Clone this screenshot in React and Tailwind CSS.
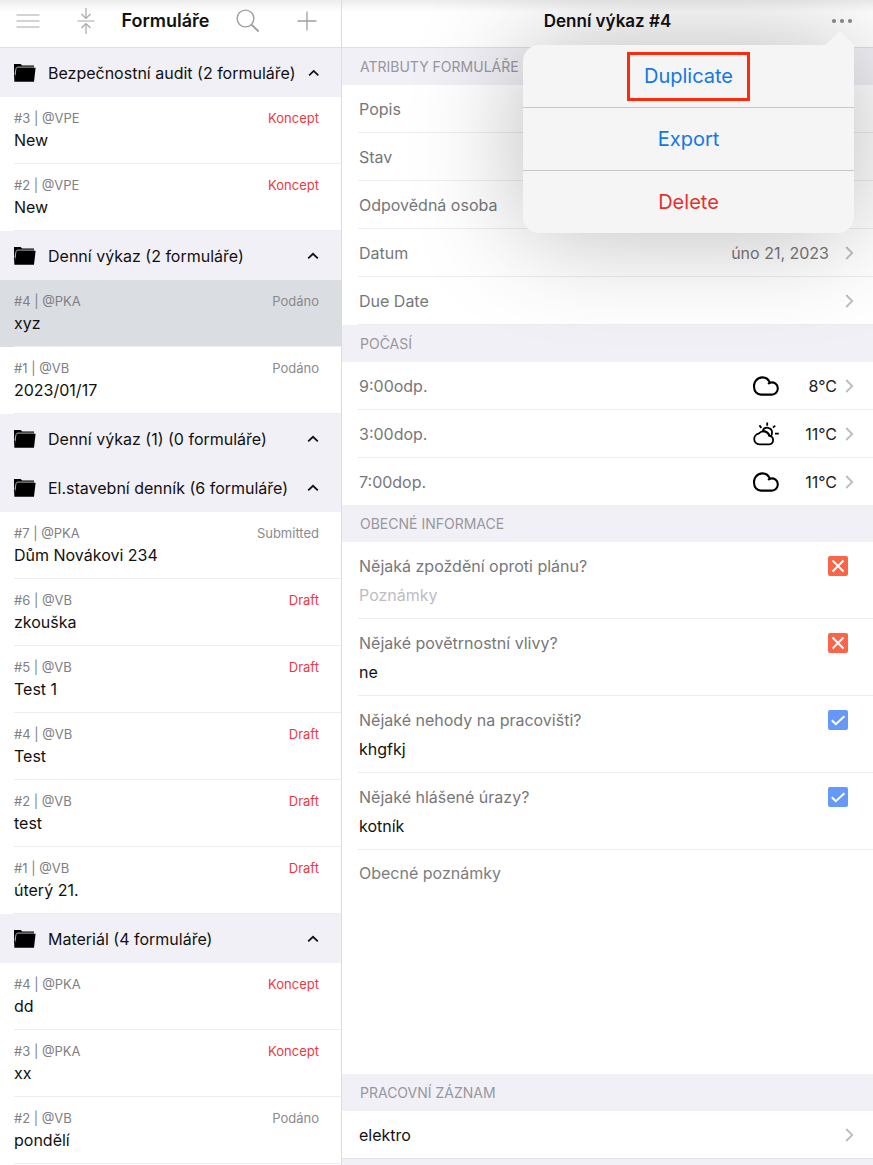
import React from "react";

const groups = [
  {
    name: "Bezpečnostní audit (2 formuláře)",
    forms: [
      { meta: "#3 | @VPE", title: "New", status: "Koncept", draft: true },
      { meta: "#2 | @VPE", title: "New", status: "Koncept", draft: true },
    ],
  },
  {
    name: "Denní výkaz (2 formuláře)",
    forms: [
      { meta: "#4 | @PKA", title: "xyz", status: "Podáno", selected: true },
      { meta: "#1 | @VB", title: "2023/01/17", status: "Podáno" },
    ],
  },
  { name: "Denní výkaz (1) (0 formuláře)", forms: [] },
  {
    name: "El.stavební denník (6 formuláře)",
    forms: [
      { meta: "#7 | @PKA", title: "Dům Novákovi 234", status: "Submitted" },
      { meta: "#6 | @VB", title: "zkouška", status: "Draft", draft: true },
      { meta: "#5 | @VB", title: "Test 1", status: "Draft", draft: true },
      { meta: "#4 | @VB", title: "Test", status: "Draft", draft: true },
      { meta: "#2 | @VB", title: "test", status: "Draft", draft: true },
      { meta: "#1 | @VB", title: "úterý 21.", status: "Draft", draft: true },
    ],
  },
  {
    name: "Materiál (4 formuláře)",
    forms: [
      { meta: "#4 | @PKA", title: "dd", status: "Koncept", draft: true },
      { meta: "#3 | @PKA", title: "xx", status: "Koncept", draft: true },
      { meta: "#2 | @VB", title: "pondělí", status: "Podáno" },
    ],
  },
];

const attributes = [
  { label: "Popis" },
  { label: "Stav" },
  { label: "Odpovědná osoba" },
  { label: "Datum", value: "úno 21, 2023" },
  { label: "Due Date" },
];

const weather = [
  { time: "9:00odp.", icon: "cloud", temp: "8°C" },
  { time: "3:00dop.", icon: "sun", temp: "11°C" },
  { time: "7:00dop.", icon: "cloud", temp: "11°C" },
];

const questions = [
  { id: "delay", text: "Nějaká zpoždění oproti plánu?", note: "", ok: false },
  { id: "weather", text: "Nějaké povětrnostní vlivy?", note: "ne", ok: false },
  { id: "accident", text: "Nějaké nehody na pracovišti?", note: "khgfkj", ok: true },
  { id: "injury", text: "Nějaké hlášené úrazy?", note: "kotník", ok: true },
];

function FolderIcon() {
  return (
    <svg width="22" height="18" viewBox="0 0 22 18" className="shrink-0">
      <path d="M0 0h6.6l1.6 1.4H20v3H3.4L1.4 8 0.4 17.6 0 17z" fill="#000" />
      <path d="M3.4 3.8h18.2L20 17.8H0.4L2.2 5z" fill="#000" />
      <path d="M0.9 10.5L2 4.6q.4-1.5 1.7-1.5h16.4" fill="none" stroke="#c4c4c8" strokeWidth="0.9" />
    </svg>
  );
}

function ChevronUp() {
  return (
    <svg width="12" height="8" viewBox="0 0 12 8" fill="none" stroke="#111" strokeWidth="1.8">
      <path d="M1.2 6.4L6 1.8l4.8 4.6" />
    </svg>
  );
}

function ChevronRight() {
  return (
    <svg width="9" height="14" viewBox="0 0 9 14" fill="none" stroke="#bdbdc0" strokeWidth="1.8">
      <path d="M1.2 1l6 6-6 6" />
    </svg>
  );
}

function WeatherIcon({ type }) {
  if (type === "sun") {
    return (
      <svg width="26" height="24" viewBox="0 0 26 24" fill="none" stroke="#000" strokeWidth="1.8">
        <path d="M6.4 22.4a5.4 5.4 0 0 1-.8-10.7 6.3 6.3 0 0 1 11 2.2 4.3 4.3 0 0 1-.4 8.5z" />
        <path d="M9.6 9.2a4.8 4.8 0 0 1 9.4 1.6 5 5 0 0 1-1.4 3.6M9.8 9.4c2.6-.6 5.6 1.2 6.6 4.8" />
        <path d="M14.2 0.4v3.4M6.4 3.4l2 2.4M22.2 3.6l-2.2 2M22 11.6h3.8" />
      </svg>
    );
  }
  return (
    <svg width="26" height="20" viewBox="0 0 26 20" fill="none" stroke="#000" strokeWidth="2.1">
      <path d="M8 18.6a6.9 6.9 0 0 1-6.8-7A8.4 8.4 0 0 1 9.4 1.4a7.8 7.8 0 0 1 7.4 5.4 5.9 5.9 0 0 1 8 5.6 6.1 6.1 0 0 1-6 6.2z" />
      <path d="M17.2 6.6q-1.2.5-2 1.4" />
    </svg>
  );
}

function SectionTitle({ children }) {
  return (
    <h2 className="flex h-[37px] shrink-0 items-center bg-[#f1f0f6] px-[18px] text-sm text-[#98979d]">
      {children}
    </h2>
  );
}

function FormItem({ form }) {
  return (
    <li className={form.selected ? "bg-[#dadde2]" : "bg-white"}>
      <button type="button" className="flex h-[67px] w-full flex-col pl-[14px] text-left">
        <span className="flex w-full flex-1 flex-col border-b border-[#ededef] pt-[11px] pr-[22px]">
          <span className="flex justify-between text-[13px] leading-5">
            <span className="text-[#808084]">{form.meta}</span>
            <span className={form.draft ? "text-[#ec3a40]" : "text-[#8a8a8e]"}>{form.status}</span>
          </span>
          <span className="text-base leading-6 text-[#111]">{form.title}</span>
        </span>
      </button>
    </li>
  );
}

function Sidebar() {
  return (
    <aside className="w-2/5 max-w-[342px] shrink-0 overflow-hidden border-r border-[#dcdce0]">
      <header className="flex h-12 items-center justify-between border-b border-[#dedee3] bg-linear-to-b from-[#ececec] to-white to-25% pr-6 pb-[6px] pl-4">
        <div className="flex items-center gap-[37px]">
          <button type="button" aria-label="Menu">
            <svg width="24" height="16" viewBox="0 0 24 16" stroke="#a8a8a8" strokeWidth="1.2">
              <path d="M0.5 2h23M0.5 8h23M0.5 14h23" />
            </svg>
          </button>
          <button type="button" aria-label="Sbalit">
            <svg width="18" height="28" viewBox="0 0 18 28" fill="none" stroke="#a8a8a8" strokeWidth="1.2">
              <path d="M0.5 14h17M9 1v10M4.5 7L9 11.4 13.5 7M9 27V17M4.5 21L9 16.6l4.5 4.4" />
            </svg>
          </button>
        </div>
        <h1 className="text-lg leading-6 font-semibold text-[#111]">Formuláře</h1>
        <div className="flex items-center gap-[37px]">
          <button type="button" aria-label="Hledat">
            <svg width="24" height="24" viewBox="0 0 24 24" fill="none" stroke="#a0a0a0">
              <circle cx="9.5" cy="9.5" r="8.4" strokeWidth="1.4" />
              <path d="M15.6 15.8l7 6.6" strokeWidth="2" />
            </svg>
          </button>
          <button type="button" aria-label="Přidat">
            <svg width="20" height="20" viewBox="0 0 20 20" stroke="#a0a0a0" strokeWidth="1.3">
              <path d="M10 0.5v19M0.5 10h19" />
            </svg>
          </button>
        </div>
      </header>

      {groups.map((group) => (
        <section key={group.name}>
          <button
            type="button"
            className="flex h-[49px] w-full items-center gap-3 bg-[#f1f0f6] pr-[22px] pl-[14px] text-left text-base text-[#111]"
          >
            <FolderIcon />
            <span className="flex-1 whitespace-nowrap">{group.name}</span>
            <ChevronUp />
          </button>
          <ul>
            {group.forms.map((form) => (
              <FormItem key={form.meta} form={form} />
            ))}
          </ul>
        </section>
      ))}
    </aside>
  );
}

function CheckBox({ id, ok }) {
  return (
    <span className="grid size-5 shrink-0">
      <input
        id={id}
        type="checkbox"
        defaultChecked={ok}
        className="col-start-1 row-start-1 size-5 appearance-none rounded-xs bg-[#fa6449] checked:bg-[#6698f7]"
      />
      <svg
        viewBox="0 0 20 20"
        fill="none"
        stroke="#fff"
        strokeWidth="2"
        className="pointer-events-none col-start-1 row-start-1 size-5"
      >
        <path d={ok ? "M3.8 10.2l4 4 8.6-8" : "M4.5 4.5l11 11M15.5 4.5l-11 11"} />
      </svg>
    </span>
  );
}

function ActionMenu() {
  return (
    <div className="absolute top-[45px] right-[19px] w-[331px] rounded-2xl rounded-tr-none bg-[#f5f5f5] text-xl shadow-[0_0_110px_rgba(0,0,0,0.28)]">
      <svg width="32" height="16" viewBox="0 0 32 16" className="absolute -top-[14px] right-0">
        <path d="M0 15q3-.5 5-2.500L16.500 1.200q1.500-1.400 3 0L32 13.500V16H0z" fill="#f5f5f5" />
      </svg>
      <button
        type="button"
        className="relative flex h-[63px] w-full items-center justify-center border-b border-[#c8c8ca] text-[#1277e8]"
      >
        <span className="flex h-[49px] items-center border-3 border-[#fb2b0e] px-[14px]">Duplicate</span>
      </button>
      <button
        type="button"
        className="flex h-[63px] w-full items-center justify-center border-b border-[#c8c8ca] text-[#1277e8]"
      >
        Export
      </button>
      <button type="button" className="flex h-[62px] w-full items-center justify-center text-[#e5302f]">
        Delete
      </button>
    </div>
  );
}

function Detail() {
  return (
    <main className="relative flex min-w-0 flex-1 flex-col overflow-hidden">
      <header className="grid h-12 shrink-0 grid-cols-[1fr_auto_1fr] items-center border-b border-[#dedee3] bg-linear-to-b from-[#ececec] to-white to-25% px-5 pb-[6px]">
        <span />
        <h1 className="text-[17px] leading-6 font-semibold text-[#111]">Denní výkaz #4</h1>
        <button type="button" aria-label="Akce" className="justify-self-end">
          <svg width="22" height="6" viewBox="0 0 22 6" fill="#8c8c8c">
            <circle cx="3" cy="3" r="2.1" />
            <circle cx="11" cy="3" r="2.1" />
            <circle cx="19" cy="3" r="2.1" />
          </svg>
        </button>
      </header>

      <SectionTitle>ATRIBUTY FORMULÁŘE</SectionTitle>
      <ul className="pl-4">
        {attributes.map((row) => (
          <li key={row.label} className="border-b border-[#ededef]">
            <button
              type="button"
              className="flex h-[47px] w-full items-center gap-4 pr-[19px] pl-px text-left text-base text-[#77777a]"
            >
              <span className="flex-1">{row.label}</span>
              {row.value && <span>{row.value}</span>}
              <ChevronRight />
            </button>
          </li>
        ))}
      </ul>

      <SectionTitle>POČASÍ</SectionTitle>
      <ul className="pl-4">
        {weather.map((row) => (
          <li key={row.time} className="border-b border-[#ededef] last:border-b-0">
            <button
              type="button"
              className="flex h-[47px] w-full items-center gap-2 pr-[19px] pl-px text-left text-base text-[#77777a]"
            >
              <span className="flex-1">{row.time}</span>
              <WeatherIcon type={row.icon} />
              <span className="w-[50px] text-right text-[#222]">{row.temp}</span>
              <ChevronRight />
            </button>
          </li>
        ))}
      </ul>

      <SectionTitle>OBECNÉ INFORMACE</SectionTitle>
      <ul className="pl-4">
        {questions.map((q) => (
          <li key={q.id} className="h-[77px] border-b border-[#ededef] pt-3 pr-[25px] pl-px text-base leading-6">
            <div className="flex items-center justify-between">
              <label htmlFor={q.id} className="text-[#77777a]">
                {q.text}
              </label>
              <CheckBox id={q.id} ok={q.ok} />
            </div>
            <input
              type="text"
              aria-label={q.text}
              defaultValue={q.note}
              placeholder="Poznámky"
              className="mt-[5px] block h-6 w-full text-[#111] placeholder:text-[#bdbdbf]"
            />
          </li>
        ))}
      </ul>
      <textarea
        aria-label="Obecné poznámky"
        placeholder="Obecné poznámky"
        className="block h-56 shrink-0 resize-none px-[17px] pt-[11px] text-base leading-6 placeholder:text-[#7d7d80]"
      />

      <SectionTitle>PRACOVNÍ ZÁZNAM</SectionTitle>
      <button
        type="button"
        className="flex h-12 shrink-0 items-center justify-between border-b border-[#e3e3e8] pr-[19px] pl-[17px] text-left text-base text-[#111]"
      >
        <span>elektro</span>
        <ChevronRight />
      </button>
      <div className="min-h-1 flex-1 bg-[#f1f0f6]" />

      <ActionMenu />
    </main>
  );
}

export default function App() {
  return (
    <div className="flex h-screen overflow-hidden bg-white font-['Inter',sans-serif]">
      <Sidebar />
      <Detail />
    </div>
  );
}
